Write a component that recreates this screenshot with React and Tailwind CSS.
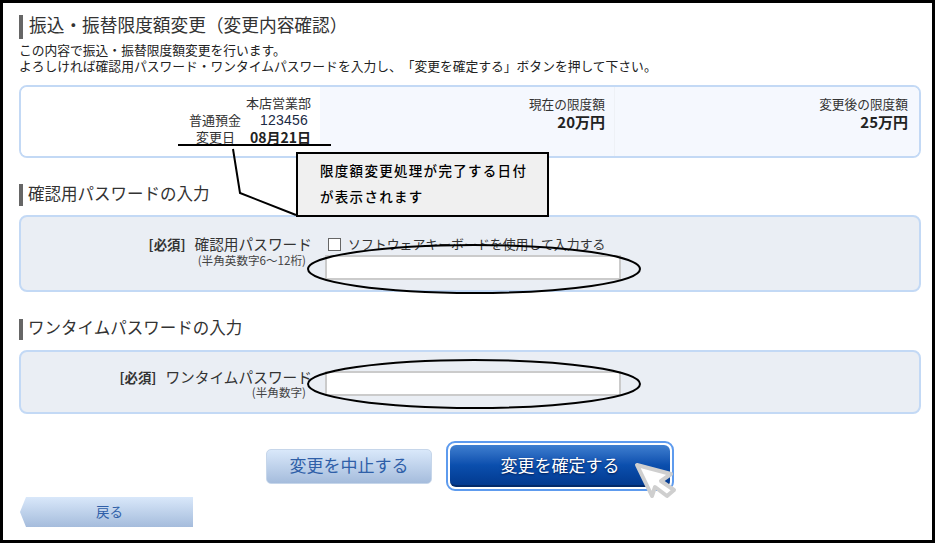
const FONT = { fontFamily: '"Noto Sans CJK JP", "Liberation Sans", sans-serif', textSpacingTrim: "space-all" };

function Heading({ children, cls }) {
  return (
    <div className={"flex items-center gap-[5px] " + cls}>
      <div className="w-[4px] h-full bg-[#666666]" />
      <div className="text-[#333333] text-[16.5px] leading-[20px] pb-[5px]">{children}</div>
    </div>
  );
}

function PasswordInput() {
  return <div className="w-[296px] h-[25px] bg-white border-[2px] border-[#cbcbcb]" />;
}

export default function App() {
  return (
    <div
      style={FONT}
      className="relative w-[935px] h-[543px] box-border border-[3px] border-black bg-white overflow-hidden pl-[16px] pr-[11px] text-[#333333]"
    >
      <div className="flex items-center gap-[6px] h-[24px] mt-[12px]">
        <div className="w-[4px] h-[24px] bg-[#666666]" />
        <div className="text-[17.7px] leading-[24px] pb-[6px] text-[#333333]">振込・振替限度額変更（変更内容確認）</div>
      </div>

      <div className="mt-[3px] text-[12.78px] leading-[16px] text-[#222222]">
        <div>この内容で振込・振替限度額変更を行います。</div>
        <div>よろしければ確認用パスワード・ワンタイムパスワードを入力し、「変更を確定する」ボタンを押して下さい。</div>
      </div>

      <div className="mt-[11px] h-[73px] border-[2px] border-[#c3d9f5] rounded-[8px] overflow-hidden flex text-[12.7px] leading-[16px]">
        <div className="w-[299px] bg-white flex flex-col items-end pt-[8px] pr-[9px] text-[13px]">
          <div>本店営業部</div>
          <div className="flex mt-[1px]">
            <span>普通預金</span>
            <span className="ml-[19px] mr-[3px] text-[14px] text-[#1a2a44] tracking-[0.2px]" style={{ fontFamily: '"Liberation Sans", sans-serif' }}>123456</span>
          </div>
          <div className="flex mt-[1px]">
            <span>変更日</span>
            <span className="ml-[15px] text-[14px] font-bold text-[#222222]">08月21日</span>
          </div>
        </div>
        <div className="w-[295px] bg-[#f5f8fe] border-r border-[#eef1f6] flex flex-col items-end pt-[9px] pr-[9px]">
          <div>現在の限度額</div>
          <div className="font-bold text-[15px] mt-[2px] text-[#222222]">20万円</div>
        </div>
        <div className="flex-1 bg-[#f5f8fe] flex flex-col items-end pt-[9px] pr-[11px]">
          <div>変更後の限度額</div>
          <div className="font-bold text-[15px] mt-[2px] text-[#222222]">25万円</div>
        </div>
      </div>

      <Heading cls="mt-[26px] h-[22px]">確認用パスワードの入力</Heading>

      <div className="mt-[9px] h-[77px] border-[2px] border-[#c3d9f5] rounded-[8px] bg-[#eaeef4] flex pt-[17px] pl-[105px]">
        <div className="w-[186px] text-right">
          <div className="text-[14.7px] leading-[20px]">
            <span className="text-[13.4px] font-bold mr-[9px]">[必須]</span>確認用パスワード
          </div>
          <div className="text-[11.6px] leading-[13px] pr-[6px] text-[#444444]">(半角英数字6～12桁)</div>
        </div>
        <div className="ml-[13px]">
          <div className="flex items-center h-[20px] ml-[3px] text-[12.9px] leading-[20px]">
            <span className="w-[13px] h-[13px] border border-[#666666] bg-white mr-[7px] shrink-0" />
            <span className="whitespace-nowrap">ソフトウェアキーボードを使用して入力する</span>
          </div>
          <div className="mt-[1px]"><PasswordInput /></div>
        </div>
      </div>

      <Heading cls="mt-[27px] h-[21px]">ワンタイムパスワードの入力</Heading>

      <div className="mt-[10px] h-[64px] border-[2px] border-[#c3d9f5] rounded-[8px] bg-[#eaeef4] flex pt-[15px] pl-[77px]">
        <div className="w-[214px] text-right">
          <div className="text-[14.7px] leading-[20px]">
            <span className="text-[13.4px] font-bold mr-[9px]">[必須]</span>ワンタイムパスワード
          </div>
          <div className="text-[11.6px] leading-[11px] pr-[6px] text-[#444444]">(半角数字)</div>
        </div>
        <div className="ml-[13px] mt-[4px]"><PasswordInput /></div>
      </div>

      <div className="mt-[27px] flex items-center">
        <div className="ml-[247px] w-[166px] h-[35px] rounded-[5px] bg-gradient-to-b from-[#d9e8fa] to-[#a5bcdc] border border-[#c6d6ea] flex items-center justify-center text-[#2f5fa8] text-[17px] pb-[2px]">
          変更を中止する
        </div>
        <div className="ml-[14px] w-[228px] h-[50px] rounded-[9px] border-[2px] border-[#5e9bee] bg-white p-[2px]">
          <div
            className="w-full h-full rounded-[6px] bg-gradient-to-b from-[#3f7fd0] via-[#0b4fae] to-[#033a90] border-b-[2px] border-[#022a6a] flex items-center justify-center text-white text-[17px]"
            style={{ textShadow: "0 1px 2px #001a50" }}
          >
            変更を確定する
          </div>
        </div>
      </div>

      <div className="mt-[6px] ml-[1px] w-[173px] h-[30px] bg-gradient-to-b from-[#d9e8fa] to-[#a5bcdc] flex items-center justify-center text-[#2f5fa8] text-[13.5px] pb-[2px] pl-[6px] [clip-path:polygon(6px_0,100%_0,100%_100%,6px_100%,0_50%)]">
        戻る
      </div>

      {/* Annotation overlays */}
      <svg className="absolute left-[-3px] top-[-3px] pointer-events-none" width="935" height="543">
        <line x1="178" y1="145" x2="331" y2="145" stroke="#000" strokeWidth="2" />
        <polyline points="233,149 240,193 296,215" fill="none" stroke="#000" strokeWidth="2" />
        <ellipse cx="474" cy="269" rx="166" ry="24" fill="none" stroke="#000" strokeWidth="2" />
        <ellipse cx="474" cy="384" rx="166" ry="24" fill="none" stroke="#000" strokeWidth="2" />
        <path d="M637 465 L671 474 L661 481 L674 490 L667 496 L655 487 L652 496 Z" fill="#fff" stroke="#cfcfcf" strokeWidth="4" strokeLinejoin="round" />
      </svg>
      <div className="absolute left-[293px] top-[149px] w-[253px] h-[65px] box-border border-[2px] border-black bg-[#f0f0f0] pl-[22px] pt-[3px] text-[13.5px] leading-[26px] tracking-[1.3px] font-medium text-black whitespace-nowrap">
        <div>限度額変更処理が完了する日付</div>
        <div>が表示されます</div>
      </div>
    </div>
  );
}
